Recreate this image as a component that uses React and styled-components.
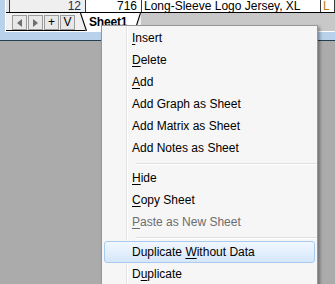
import React from "react";
import styled, { createGlobalStyle } from "styled-components";

const GlobalStyle = createGlobalStyle`
  html, body {
    margin: 0;
    padding: 0;
    width: 335px;
    height: 284px;
    overflow: hidden;
    background: #ababab;
    font-family: "Liberation Sans", Arial, sans-serif;
  }
`;

const Page = styled.div`
  position: relative;
  width: 335px;
  height: 284px;
  background: #ababab;
`;

const Frame = styled.div`
  background: #b9d1ea;
  padding: 0 0 8px 5px;
  border-bottom: 1px solid #24404f;
`;

const Inner = styled.div`
  display: flex;
  flex-direction: column;
  border-left: 1px solid #ffffff;
  border-bottom: 1px solid #ffffff;
`;

const GridArea = styled.div`
  height: 12px;
  display: flex;
  flex-direction: column;
  justify-content: flex-end;
  overflow: hidden;
  background: #e6e6e6;
  padding-left: 3px;
  border-bottom: 1px solid #000;
`;

const Row = styled.div`
  flex: none;
  display: grid;
  grid-template-columns: 76px 56px 179px 1fr;
  height: 17px;
  border-left: 1px solid #3a3a3a;
  background: #fff;
`;

const Cell = styled.div`
  display: flex;
  align-items: flex-end;
  justify-content: ${(p) => (p.$right ? "flex-end" : "flex-start")};
  padding: 0 ${(p) => (p.$right ? "4px" : "0")} 0 ${(p) => (p.$right ? "0" : "2px")};
  border-right: 1px solid #3a3a3a;
  background: ${(p) => (p.$head ? "#efefef" : "#fff")};
  color: ${(p) => p.$color || "#000"};
  font-size: 12px;
  line-height: 11px;
  white-space: nowrap;
  overflow: hidden;
`;

const TabBar = styled.div`
  display: flex;
  height: 18px;
`;

const Nav = styled.div`
  display: flex;
  gap: 1px;
  padding: 2px 3px 0 6px;
  background: #f0f0f0;
  border-bottom: 1px solid #000;
`;

const NavButton = styled.div`
  width: 13px;
  height: 13px;
  border: 1px solid #9c9c9c;
  background: #e8e8e8;
  display: flex;
  align-items: center;
  justify-content: center;
  font-size: 12px;
  line-height: 13px;
  color: #000;
`;

const tabSvg = encodeURIComponent(
  `<svg xmlns="http://www.w3.org/2000/svg" width="63" height="18">` +
    `<rect width="63" height="18" fill="#f0f0f0"/>` +
    `<polygon points="2,0 63,0 58,18 8,18" fill="#ffffff"/>` +
    `<line x1="0" y1="17.5" x2="7.5" y2="17.5" stroke="#000" stroke-width="1"/>` +
    `<line x1="2.5" y1="0" x2="8.5" y2="18" stroke="#000" stroke-width="1.1"/>` +
    `<line x1="62.5" y1="0" x2="58" y2="14" stroke="#000" stroke-width="1.1"/>` +
    `</svg>`
);

const SheetTab = styled.div`
  width: 63px;
  height: 18px;
  padding-left: 11px;
  box-sizing: border-box;
  background: url("data:image/svg+xml,${tabSvg}") no-repeat;
  font-size: 12px;
  font-weight: bold;
  letter-spacing: -0.2px;
  line-height: 18px;
  color: #000;
`;

const BarRest = styled.div`
  flex: 1;
  background: #c8c8c8;
`;

const Menu = styled.div`
  position: absolute;
  left: 101px;
  top: 25px;
  width: 215px;
  height: 280px;
  padding-top: 1px;
  border: 1px solid #979797;
  background: linear-gradient(
    to right,
    #f6f6f6 0 24px,
    #e2e3e3 24px 25px,
    #ffffff 25px 26px,
    #f6f6f6 26px
  );
  box-shadow: 2px 2px 3px rgba(0, 0, 0, 0.35);
`;

const Item = styled.div`
  height: 20px;
  margin: 0 2px;
  padding-left: 27px;
  border: 1px solid ${(p) => (p.$active ? "#a9cbef" : "transparent")};
  border-radius: 3px;
  background: ${(p) =>
    p.$active ? "linear-gradient(to bottom, #f1f7fe, #d5e7fa)" : "transparent"};
  color: ${(p) => (p.$disabled ? "#6d6d6d" : "#000")};
  font-size: 12px;
  line-height: 20px;
  white-space: nowrap;

  u {
    text-decoration: underline;
    text-underline-offset: 2px;
  }
`;

const Separator = styled.div`
  margin: 4px 0 2px 34px;
  height: 1px;
  border-top: 1px solid #e0e0e0;
  border-bottom: 1px solid #ffffff;
  height: 0;
`;

const Arrow = ({ dir }) => (
  <svg width="5" height="8" viewBox="0 0 5 8">
    {dir === "left" ? (
      <polygon points="5,0 5,8 0,4" fill="#6e6e6e" />
    ) : (
      <polygon points="0,0 0,8 5,4" fill="#6e6e6e" />
    )}
  </svg>
);

const items = [
  { key: "I", rest: "nsert" },
  { key: "D", rest: "elete" },
  { key: "A", rest: "dd" },
  { pre: "Add Graph as Sheet" },
  { pre: "Add Matrix as Sheet" },
  { pre: "Add Notes as Sheet" },
  { sep: true },
  { key: "H", rest: "ide" },
  { key: "C", rest: "opy Sheet" },
  { key: "P", rest: "aste as New Sheet", disabled: true },
  { sep: true },
  { pre: "Duplicate ", key: "W", rest: "ithout Data", active: true },
  { pre: "D", key: "u", rest: "plicate" },
];

export default function App() {
  return (
    <Page>
      <GlobalStyle />
      <Frame>
        <Inner>
          <GridArea>
            <Row>
              <Cell $head $right $color="#1c2a5a">11</Cell>
              <Cell $right>716</Cell>
              <Cell>Long-Sleeve Logo Jersey, L</Cell>
              <Cell $color="#c47a10">L</Cell>
            </Row>
            <Row>
              <Cell $head $right $color="#1c2a5a">12</Cell>
              <Cell $right>716</Cell>
              <Cell>Long-Sleeve Logo Jersey, XL</Cell>
              <Cell $color="#c47a10">L</Cell>
            </Row>
          </GridArea>
          <TabBar>
            <Nav>
              <NavButton>
                <Arrow dir="left" />
              </NavButton>
              <NavButton>
                <Arrow dir="right" />
              </NavButton>
              <NavButton>+</NavButton>
              <NavButton>V</NavButton>
            </Nav>
            <SheetTab>Sheet1</SheetTab>
            <BarRest />
          </TabBar>
        </Inner>
      </Frame>
      <Menu>
        {items.map((it, i) =>
          it.sep ? (
            <Separator key={i} />
          ) : (
            <Item key={i} $active={it.active} $disabled={it.disabled}>
              {it.pre}
              {it.key && <u>{it.key}</u>}
              {it.rest}
            </Item>
          )
        )}
      </Menu>
    </Page>
  );
}
